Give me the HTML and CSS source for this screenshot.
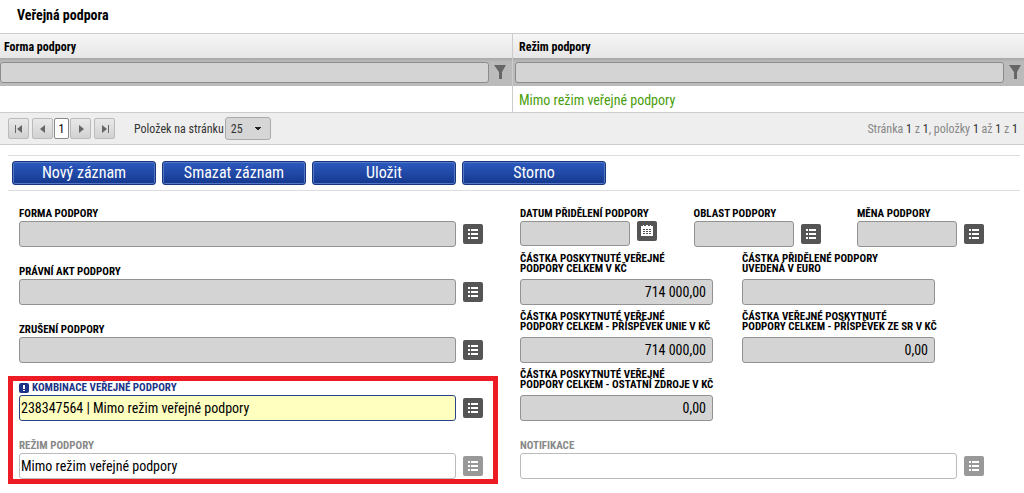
FILE: index.html
```html
<!DOCTYPE html>
<html lang="cs">
<head>
<meta charset="utf-8">
<title>Veřejná podpora</title>
<link rel="stylesheet" href="styles.css">
</head>
<body>
<svg class="sprite" aria-hidden="true">
  <symbol id="list" viewBox="0 0 20 20"><path d="M5 5h2v2H5zM8 5h7v2H8zM5 9h2v2H5zM8 9h7v2H8zM5 13h2v2H5zM8 13h7v2H8z" fill="#fff"/></symbol>
  <symbol id="calendar" viewBox="0 0 20 20"><path fill-rule="evenodd" d="M4 5h2V4h1v1h2V4h2v1h2V4h1v1h2v10H4zM6 8v1h2V8zM9 8v1h2V8zM12 8v1h2V8zM6 10v1h2v-1zM9 10v1h2v-1zM12 10v1h2v-1zM6 12v1h2v-1zM9 12v1h2v-1zM12 12v1h2v-1z" fill="#fff"/></symbol>
  <symbol id="funnel" viewBox="0 0 12 16"><path d="M0 1h12L8 8v7H5V8z" fill="#666"/></symbol>
</svg>
<h1 class="title">Veřejná podpora</h1>
<table class="grid">
  <thead>
    <tr class="grid-head"><th>Forma podpory</th><th>Režim podpory</th></tr>
    <tr class="grid-filter">
      <td><div class="filter"><input type="text" aria-label="Filtr: Forma podpory"><button type="button" aria-label="Filtrovat"><svg><use href="#funnel"/></svg></button></div></td>
      <td><div class="filter"><input type="text" aria-label="Filtr: Režim podpory"><button type="button" aria-label="Filtrovat"><svg><use href="#funnel"/></svg></button></div></td>
    </tr>
  </thead>
  <tbody><tr class="grid-row"><td></td><td>Mimo režim veřejné podpory</td></tr></tbody>
</table>
<nav class="pager">
  <div class="pages">
    <button type="button" class="edge" aria-label="První"><svg viewBox="0 0 10 10"><path d="M1 1h1v8H1zM8 1v8L3 5z"/></svg></button>
    <button type="button" aria-label="Předchozí"><svg viewBox="0 0 10 10"><path d="M7 1v8L2 5z"/></svg></button>
    <button type="button" class="current">1</button>
    <button type="button" class="edge" aria-label="Další"><svg viewBox="0 0 10 10"><path d="M3 1v8l5-4z"/></svg></button>
    <button type="button" aria-label="Poslední"><svg viewBox="0 0 10 10"><path d="M2 1v8l5-4zM8 1h1v8H8z"/></svg></button>
  </div>
  <label for="size">Položek na stránku</label>
  <select id="size"><option>25</option></select>
  <p class="summary">Stránka <b>1</b> z <b>1</b>, položky <b>1</b> až <b>1</b> z <b>1</b></p>
</nav>
<div class="actions">
  <button type="button">Nový záznam</button>
  <button type="button">Smazat záznam</button>
  <button type="button">Uložit</button>
  <button type="button">Storno</button>
</div>
<form class="form">
  <div class="column">
    <div class="field"><label for="forma">FORMA PODPORY</label><div class="control"><input id="forma" type="text"><button type="button" aria-label="Vybrat"><svg><use href="#list"/></svg></button></div></div>
    <div class="field"><label for="akt">PRÁVNÍ AKT PODPORY</label><div class="control"><input id="akt" type="text"><button type="button" aria-label="Vybrat"><svg><use href="#list"/></svg></button></div></div>
    <div class="field"><label for="zruseni">ZRUŠENÍ PODPORY</label><div class="control"><input id="zruseni" type="text"><button type="button" aria-label="Vybrat"><svg><use href="#list"/></svg></button></div></div>
    <div class="highlight">
      <div class="field required"><label for="kombinace"><svg class="mark" viewBox="0 0 10 10"><rect width="10" height="10" rx="2"/><path d="M4 2h2v4H4zM4 7h2v1H4z" fill="#fff"/></svg>KOMBINACE VEŘEJNÉ PODPORY</label><div class="control"><input id="kombinace" type="text" value="238347564 | Mimo režim veřejné podpory"><button type="button" aria-label="Vybrat"><svg><use href="#list"/></svg></button></div></div>
      <div class="field readonly"><label for="rezim">REŽIM PODPORY</label><div class="control"><input id="rezim" type="text" readonly value="Mimo režim veřejné podpory"><button type="button" aria-label="Vybrat"><svg><use href="#list"/></svg></button></div></div>
    </div>
  </div>
  <div class="column">
    <div class="trio">
      <div class="field date"><label for="datum">DATUM PŘIDĚLENÍ PODPORY</label><div class="control"><input id="datum" type="text"><button type="button" aria-label="Kalendář"><svg><use href="#calendar"/></svg></button></div></div>
      <div class="field"><label for="oblast">OBLAST PODPORY</label><div class="control"><input id="oblast" type="text"><button type="button" aria-label="Vybrat"><svg><use href="#list"/></svg></button></div></div>
      <div class="field"><label for="mena">MĚNA PODPORY</label><div class="control"><input id="mena" type="text"><button type="button" aria-label="Vybrat"><svg><use href="#list"/></svg></button></div></div>
    </div>
    <div class="pair">
      <div class="field amount"><label for="celkem">ČÁSTKA POSKYTNUTÉ VEŘEJNÉ<br>PODPORY CELKEM V KČ</label><div class="control"><input id="celkem" type="text" value="714 000,00"></div></div>
      <div class="field amount"><label for="euro">ČÁSTKA PŘIDĚLENÉ PODPORY<br>UVEDENÁ V EURO</label><div class="control"><input id="euro" type="text"></div></div>
      <div class="field amount"><label for="unie">ČÁSTKA POSKYTNUTÉ VEŘEJNÉ<br>PODPORY CELKEM - PŘÍSPĚVEK UNIE V KČ</label><div class="control"><input id="unie" type="text" value="714 000,00"></div></div>
      <div class="field amount"><label for="sr">ČÁSTKA VEŘEJNÉ POSKYTNUTÉ<br>PODPORY CELKEM - PŘÍSPĚVEK ZE SR V KČ</label><div class="control"><input id="sr" type="text" value="0,00"></div></div>
      <div class="field amount"><label for="ostatni">ČÁSTKA POSKYTNUTÉ VEŘEJNÉ<br>PODPORY CELKEM - OSTATNÍ ZDROJE V KČ</label><div class="control"><input id="ostatni" type="text" value="0,00"></div></div>
    </div>
    <div class="field readonly"><label for="notifikace">NOTIFIKACE</label><div class="control"><input id="notifikace" type="text" readonly><button type="button" aria-label="Vybrat"><svg><use href="#list"/></svg></button></div></div>
  </div>
</form>
</body>
</html>
```
FILE: styles.css
```css
* { box-sizing: border-box; }
body { margin: 0; background: #fff; color: #000; }
body, button, input, select { font-family: "Roboto Condensed", "Liberation Sans Narrow", Roboto, sans-serif; }
.sprite { display: none; }
button { padding: 0; border: 0; background: none; }
input { min-width: 0; }
.title { margin: 0; padding: 5px 17px 8px; font-size: 14px; line-height: 20px; font-weight: 700; }

.grid { width: 100%; border-collapse: separate; border-spacing: 0; table-layout: fixed; border-top: 1px solid #ccc; }
.grid th, .grid td { padding: 0; text-align: left; }
.grid th + th, .grid td + td { border-left: 1px solid #ccc; }
.grid .grid-head th { height: 24px; padding: 2px 4px 0; background: linear-gradient(#f6f6f6, #e6e6e6); font-size: 12px; font-weight: 700; }
.grid .grid-head th + th { padding-left: 6px; }
.grid-filter td { height: 28px; background: linear-gradient(#a8a8a8, #bbb 4px); }
.filter { display: flex; align-items: center; padding-right: 6px; }
.grid td + td .filter { padding: 0 3px 0 2px; }
.filter input { flex: 1; height: 21px; border: 1px solid #8c8c8c; border-radius: 3px; background: #d4d4d4; }
.filter button { width: 12px; height: 16px; margin-left: 5px; }
.filter svg { display: block; width: 12px; height: 16px; }
.grid .grid-row td { height: 26px; padding: 2px 6px 0; color: #4a9e0c; font-size: 14px; line-height: 20px; }

.pager { display: flex; align-items: center; height: 33px; padding: 0 6px 0 8px; border: solid #ccc; border-width: 1px 0; background: #eee; font-size: 12px; color: #333; }
.pages { display: flex; margin-right: 19px; }
.pages button { width: 21px; height: 21px; border: 1px solid #bbb; border-radius: 2px; background: linear-gradient(#e8e8e8, #d2d2d2); font-size: 12px; }
.pages .edge { margin-right: 3px; }
.pages .current { width: 15px; margin: 0 1px; border-color: #888; background: #fff; }
.pages svg { display: block; width: 10px; height: 10px; margin: auto; fill: #666; }
.pager select {
  appearance: none;
  width: 46px;
  height: 23px;
  margin: 0 0 0 1px;
  padding: 0 5px;
  border: 1px solid #aaa;
  border-radius: 3px;
  background:
    linear-gradient(to bottom right, #222 50%, transparent 50%) 32px 9px / 4px 4px no-repeat,
    linear-gradient(to bottom left, #222 50%, transparent 50%) 28px 9px / 4px 4px no-repeat,
    #d6d6d6;
  color: #333;
  font-size: 12px;
}
.summary { margin: 0 0 0 auto; color: #888; }
.summary b { color: #333; font-weight: 400; }

.actions { display: flex; gap: 6px; margin: 10px 4px 0 8px; padding: 5px 4px; border: solid #ddd; border-width: 1px 0; }
.actions button { width: 144px; height: 24px; border: 1px solid #17357f; border-radius: 3px; background: linear-gradient(#2c5abf, #15388e); box-shadow: inset 0 0 0 1px #5478c4; color: #fff; font-size: 16px; line-height: 20px; }

.form { display: grid; grid-template-columns: 464px 464px; gap: 37px; padding: 5px 19px 0; }
.field { display: flex; flex-direction: column; height: 58px; }
.field label { display: flex; align-items: center; height: 10px; margin: 13px 0 2px; font-size: 11px; line-height: 10px; font-weight: 700; white-space: nowrap; }
.control { display: flex; align-items: center; gap: 7px; }
.control input { flex: 1; width: 0; height: 26px; padding: 0 1px; border: 1px solid #929292; border-radius: 3px; background: #d4d4d4; color: #000; font-size: 14px; }
.control button { width: 20px; height: 20px; border-radius: 2px; background: #555; }
.control svg { display: block; width: 20px; height: 20px; }
.field .mark { width: 10px; height: 10px; margin-right: 3px; fill: #1b3488; }
.required label { color: #1b3488; }
.required input { border-color: #2a4388; background: #ffffc0; }
.readonly label { color: #888; }
.readonly input { border-color: #bbb; background: #fff; }
.readonly button { background: #999; }
.highlight { position: relative; }
.highlight::after { content: ""; position: absolute; inset: 6px -15px 2px -11px; border: 5px solid #ed1c24; pointer-events: none; }
.trio { display: grid; grid-template-columns: 137px 127px 127px; justify-content: space-between; }
.date .control { align-items: flex-start; }
.date .control input { height: 25px; }
.pair { display: grid; grid-template-columns: 193px 193px; gap: 0 29px; }
.amount label { display: block; height: 20px; margin: 0 0 5px; }
.amount input { padding: 0 6px; text-align: right; }
```
